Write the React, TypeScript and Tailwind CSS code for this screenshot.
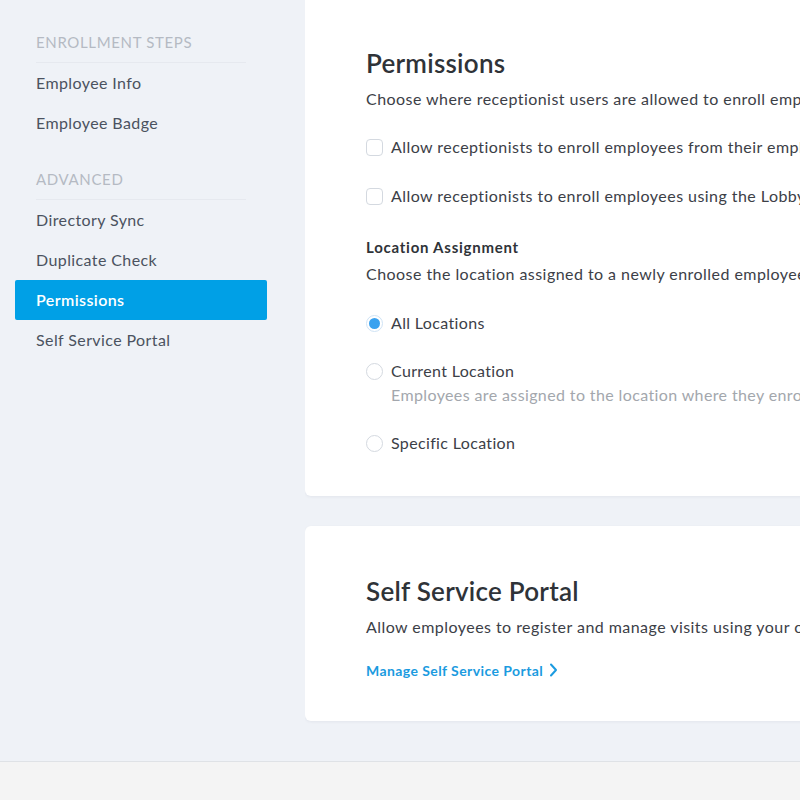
import React from 'react';

const font = { fontFamily: 'Lato, "Noto Sans", sans-serif' };

// --- SIDEBAR ---

function NavHeader({ label }: { label: string }) {
  return (
    <div className="mx-[21px] h-[40px] flex items-center border-b border-[#e6e9ef] text-[15px] uppercase tracking-[0.65px] text-[#b5bac3]">
      {label}
    </div>
  );
}

function NavItem({ label, active }: { label: string; active?: boolean }) {
  return (
    <div
      className={`h-[40px] px-[21px] flex items-center text-[16px] tracking-[0.4px] rounded-[2px] ${
        active ? 'bg-[#00a0e6] text-white font-semibold' : 'text-[#4b5260]'
      }`}
    >
      {label}
    </div>
  );
}

// --- FORM CONTROLS ---

function Checkbox({ label }: { label: string }) {
  return (
    <div className="flex items-center gap-[8px] h-[24px] whitespace-nowrap">
      <span className="w-[17px] h-[17px] rounded-[4px] border border-[#d4d9e0] bg-white shrink-0" />
      <span className="text-[16px] tracking-[0.45px] text-[#3c4047]">{label}</span>
    </div>
  );
}

function Radio({ label, checked, hint }: { label: string; checked?: boolean; hint?: string }) {
  return (
    <div className="whitespace-nowrap">
      <div className="flex items-center gap-[8px] h-[24px]">
        <span
          className={`w-[17px] h-[17px] rounded-full border bg-white shrink-0 flex items-center justify-center ${
            checked ? 'border-[#cfe3f5]' : 'border-[#d4d9e0]'
          }`}
        >
          {checked && <span className="w-[11px] h-[11px] rounded-full bg-[#3aa2ef]" />}
        </span>
        <span className="text-[16px] tracking-[0.35px] text-[#3c4047]">{label}</span>
      </div>
      {hint && (
        <div className="pl-[25px] h-[24px] leading-[24px] text-[16px] tracking-[0.38px] text-[#a3a7ad]">{hint}</div>
      )}
    </div>
  );
}

export default function App() {
  return (
    <div className="w-[800px] h-[800px] flex flex-col overflow-hidden bg-[#eff2f7]" style={font}>
      <div className="h-[761px] flex shrink-0">
        {/* SIDEBAR */}
        <div className="w-[305px] shrink-0 pt-[23px] pl-[15px]">
          <div className="w-[252px]">
            <NavHeader label="Enrollment Steps" />
            <NavItem label="Employee Info" />
            <NavItem label="Employee Badge" />
            <div className="h-[17px]" />
            <NavHeader label="Advanced" />
            <NavItem label="Directory Sync" />
            <NavItem label="Duplicate Check" />
            <NavItem label="Permissions" active />
            <NavItem label="Self Service Portal" />
          </div>
        </div>

        {/* MAIN */}
        <div className="flex-1 min-w-0 overflow-hidden">
          <div className="w-[600px]">
            {/* PERMISSIONS CARD */}
            <div className="bg-white rounded-b-[6px] shadow-[0_1px_3px_rgba(30,40,60,0.06)] pl-[61px] pt-[47px] pb-[41px] whitespace-nowrap">
              <h2 className="text-[26px] leading-[32px] font-semibold tracking-[0.25px] text-[#2f3338]">Permissions</h2>
              <p className="mt-[8px] text-[16px] leading-[24px] tracking-[0.45px] text-[#3c4047]">
                Choose where receptionist users are allowed to enroll employees.
              </p>
              <div className="mt-[24px]">
                <Checkbox label="Allow receptionists to enroll employees from their employee list" />
              </div>
              <div className="mt-[25px]">
                <Checkbox label="Allow receptionists to enroll employees using the Lobby app" />
              </div>
              <h3 className="mt-[28px] text-[15px] leading-[22px] font-bold tracking-[0.75px] text-[#2f3338]">
                Location Assignment
              </h3>
              <p className="mt-[4px] text-[16px] leading-[24px] tracking-[0.45px] text-[#3c4047]">
                Choose the location assigned to a newly enrolled employee.
              </p>
              <div className="mt-[25px]">
                <Radio label="All Locations" checked />
              </div>
              <div className="mt-[24px]">
                <Radio label="Current Location" hint="Employees are assigned to the location where they enroll." />
              </div>
              <div className="mt-[24px]">
                <Radio label="Specific Location" />
              </div>
            </div>

            {/* SELF SERVICE CARD */}
            <div className="mt-[30px] bg-white rounded-l-[6px] shadow-[0_1px_3px_rgba(30,40,60,0.06)] pl-[61px] pt-[49px] pb-[41px] whitespace-nowrap">
              <h2 className="text-[26px] leading-[32px] font-semibold tracking-[0.25px] text-[#2f3338]">Self Service Portal</h2>
              <p className="mt-[8px] text-[16px] leading-[24px] tracking-[0.45px] text-[#3c4047]">
                Allow employees to register and manage visits using your own portal.
              </p>
              <a className="mt-[21px] h-[20px] flex items-center gap-[6px] text-[14px] font-bold tracking-[0.42px] text-[#1b9be0]">
                Manage Self Service Portal
                <svg width="9" height="14" viewBox="0 0 9 14" fill="none">
                  <path d="M2 1.5 L7 7 L2 12.5" stroke="#1b9be0" strokeWidth="2" strokeLinecap="round" strokeLinejoin="round" />
                </svg>
              </a>
            </div>
          </div>
        </div>
      </div>

      {/* FOOTER */}
      <div className="flex-1 bg-[#f4f4f4] border-t border-[#dfe2e6]" />
    </div>
  );
}
